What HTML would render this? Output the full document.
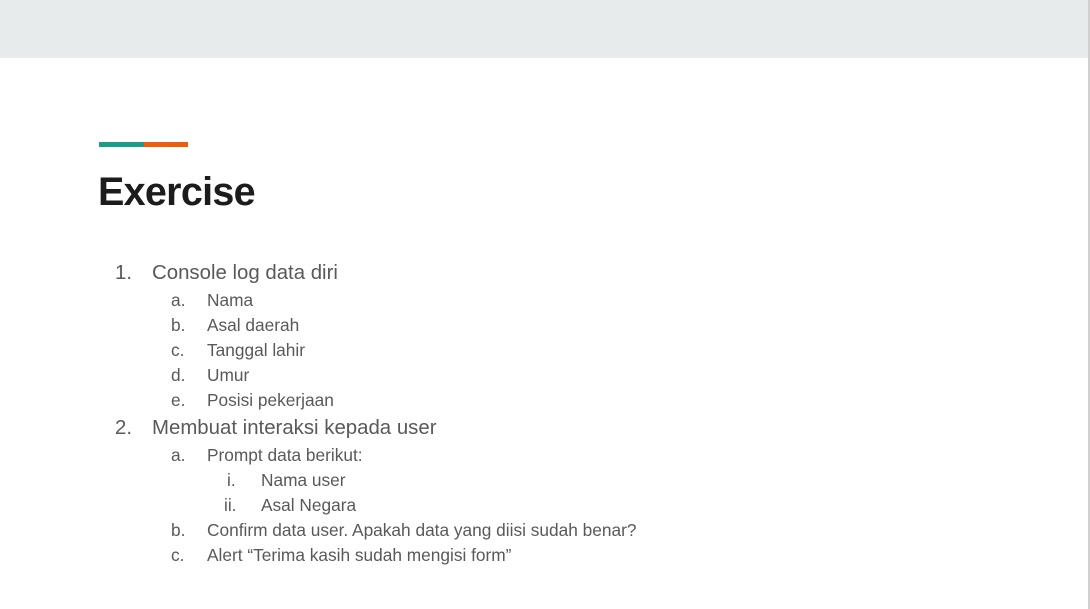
<!DOCTYPE html>
<html><head><meta charset="utf-8"><style>
html,body{margin:0;padding:0;width:1090px;height:609px;overflow:hidden;background:#fff;font-family:"Liberation Sans",sans-serif}
.top{position:absolute;left:0;top:0;width:1088px;height:58px;background:#e8ebec}
.vl{position:absolute;left:1088px;top:0;width:2px;height:609px;background:#d0d0d0}
.b1{position:absolute;left:99px;top:142px;width:45px;height:5px;background:#1a9e8a}
.b2{position:absolute;left:144px;top:142px;width:44px;height:5px;background:#ef5b0c}
h1{position:absolute;left:98px;top:166px;margin:0;font-size:39.5px;line-height:52px;font-weight:bold;color:#1c1c1c;letter-spacing:-0.7px}
.l{position:absolute;height:24px;line-height:24px;color:#595959;white-space:nowrap}
.a{font-size:20.4px}.b{font-size:17.3px}
</style></head><body>
<div class="top"></div><div class="vl"></div>
<div class="b1"></div><div class="b2"></div>
<h1>Exercise</h1>
<div class="l a" style="left:115px;top:261px">1.</div><div class="l a" style="left:152px;top:261px">Console log data diri</div>
<div class="l b" style="left:171px;top:288px">a.</div><div class="l b" style="left:207px;top:288px">Nama</div>
<div class="l b" style="left:171px;top:313px">b.</div><div class="l b" style="left:207px;top:313px">Asal daerah</div>
<div class="l b" style="left:171px;top:338px">c.</div><div class="l b" style="left:207px;top:338px">Tanggal lahir</div>
<div class="l b" style="left:171px;top:363px">d.</div><div class="l b" style="left:207px;top:363px">Umur</div>
<div class="l b" style="left:171px;top:388px">e.</div><div class="l b" style="left:207px;top:388px">Posisi pekerjaan</div>
<div class="l a" style="left:115px;top:416px">2.</div><div class="l a" style="left:152px;top:416px">Membuat interaksi kepada user</div>
<div class="l b" style="left:171px;top:443px">a.</div><div class="l b" style="left:207px;top:443px">Prompt data berikut:</div>
<div class="l b" style="left:227px;top:468px">i.</div><div class="l b" style="left:261px;top:468px">Nama user</div>
<div class="l b" style="left:224px;top:493px">ii.</div><div class="l b" style="left:261px;top:493px">Asal Negara</div>
<div class="l b" style="left:171px;top:518px">b.</div><div class="l b" style="left:207px;top:518px">Confirm data user. Apakah data yang diisi sudah benar?</div>
<div class="l b" style="left:171px;top:543px">c.</div><div class="l b" style="left:207px;top:543px">Alert “Terima kasih sudah mengisi form”</div>
</body></html>
